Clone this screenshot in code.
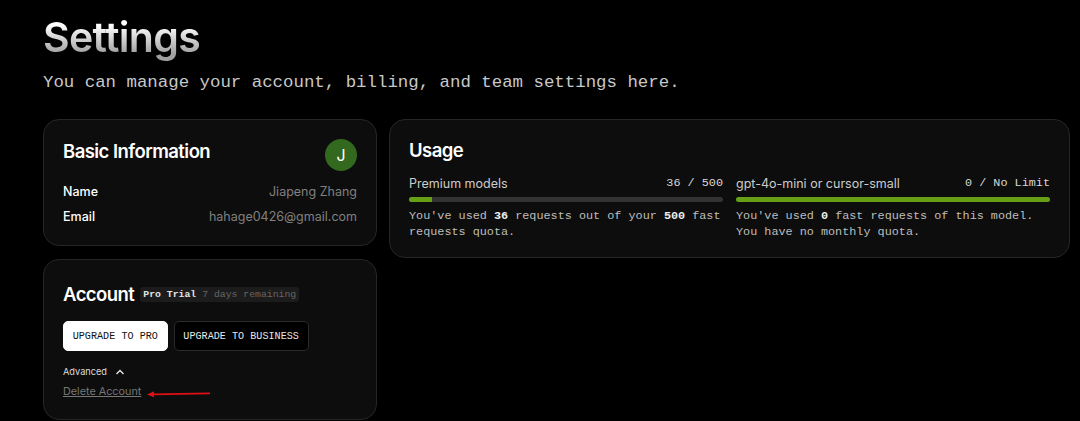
<script lang="ts">
  const usage = [
    { label: 'Premium models', count: '36 / 500', pct: 7.2 },
    { label: 'gpt-4o-mini or cursor-small', count: '0 / No Limit', pct: 100 }
  ];
</script>

<div class="page">
  <h1 class="title">Settings</h1>
  <p class="subtitle">You can manage your account, billing, and team settings here.</p>

  <div class="columns">
    <div class="left">
      <section class="card info">
        <div class="info-head">
          <h2>Basic Information</h2>
          <div class="avatar">J</div>
        </div>
        <div class="row"><span class="key">Name</span><span class="val">Jiapeng Zhang</span></div>
        <div class="row"><span class="key">Email</span><span class="val">hahage0426@gmail.com</span></div>
      </section>

      <section class="card account">
        <div class="account-head">
          <h2>Account</h2>
          <span class="badge"><b>Pro Trial</b> <span>7 days remaining</span></span>
        </div>
        <div class="buttons">
          <button class="btn primary">UPGRADE TO PRO</button>
          <button class="btn">UPGRADE TO BUSINESS</button>
        </div>
        <div class="advanced">
          Advanced
          <svg width="10" height="6" viewBox="0 0 10 6" fill="none">
            <path d="M1.5 5L5 1.5L8.500 5" stroke="#e8e8e8" stroke-width="1.300" />
          </svg>
        </div>
        <a class="delete" href="#delete">Delete Account</a>
        <!-- red annotation arrow from the screenshot -->
        <svg class="arrow" width="64" height="8" viewBox="0 0 64 8">
          <path d="M6 4.300L63 3.300" stroke="#e00f14" stroke-width="1.800" />
          <path d="M0 4.400L7 1.200V7.200Z" fill="#e00f14" />
        </svg>
      </section>
    </div>

    <section class="card usage">
      <h2>Usage</h2>
      <div class="meters">
        <div class="meter">
          <div class="meter-head"><span>{usage[0].label}</span><code>{usage[0].count}</code></div>
          <div class="track"><div class="fill" style="width: {usage[0].pct}%"></div></div>
          <p class="note">You've used <b>36</b> requests out of your <b>500</b> fast<br />requests quota.</p>
        </div>
        <div class="meter">
          <div class="meter-head"><span>{usage[1].label}</span><code>{usage[1].count}</code></div>
          <div class="track"><div class="fill" style="width: {usage[1].pct}%"></div></div>
          <p class="note">You've used <b>0</b> fast requests of this model.<br />You have no monthly quota.</p>
        </div>
      </div>
    </section>
  </div>
</div>

<style>
  :global(body) {
    background: #000;
    overflow: hidden;
  }

  .page {
    height: 421px;
    box-sizing: border-box;
    padding: 13px 10px 0 43px;
    font-family: Inter, 'Liberation Sans', sans-serif;
    color: #fff;
  }

  .title {
    margin: 0;
    font-size: 41px;
    line-height: 48px;
    font-weight: 600;
    letter-spacing: -0.7px;
    background: linear-gradient(180deg, #fff 25%, #a0a0a0 85%);
    -webkit-background-clip: text;
    background-clip: text;
    color: transparent;
    width: fit-content;
  }

  .subtitle {
    margin: 10px 0 0;
    font-family: 'Liberation Mono', monospace;
    font-size: 17.4px;
    line-height: 24px;
    color: #c8c8c8;
  }

  .columns {
    display: flex;
    gap: 12px;
    margin-top: 24px;
    align-items: flex-start;
  }

  .left {
    width: 334px;
    display: flex;
    flex-direction: column;
    gap: 13px;
    flex: none;
  }

  .card {
    box-sizing: border-box;
    background: #0d0d0d;
    border: 1px solid #262626;
    border-radius: 16px;
  }

  h2 {
    margin: 0;
    font-size: 18.5px;
    line-height: 24px;
    font-weight: 600;
    letter-spacing: -0.55px;
  }

  .info {
    height: 127px;
    padding: 19px 19px 0;
  }

  .info-head {
    display: flex;
    justify-content: space-between;
    height: 33px;
    margin-bottom: 6.5px;
  }

  .avatar {
    width: 32px;
    height: 32px;
    border-radius: 50%;
    background: #33691e;
    display: flex;
    align-items: center;
    justify-content: center;
    font-size: 16px;
    font-weight: 400;
    margin-top: -0.5px;
  }

  .row {
    display: flex;
    justify-content: space-between;
    height: 25.5px;
    line-height: 25.5px;
    font-size: 12.5px;
  }

  .key {
    font-weight: 500;
  }

  .val {
    color: #808080;
  }

  .account {
    position: relative;
    height: 161px;
    padding: 22px 19px 0;
  }

  .account-head {
    display: flex;
    align-items: center;
    gap: 6px;
  }

  .badge {
    background: #1c1c1c;
    border-radius: 3px;
    padding: 0 3px;
    font-family: 'Liberation Mono', monospace;
    font-size: 9.8px;
    line-height: 15px;
    color: #666;
  }

  .badge b {
    color: #e4e4e4;
  }

  .buttons {
    display: flex;
    gap: 6px;
    margin-top: 15px;
  }

  .btn {
    height: 30px;
    padding: 0 8.7px;
    border: 1px solid #2a2a2a;
    border-radius: 5px;
    background: #000;
    color: #e8e8e8;
    font-family: 'Liberation Mono', monospace;
    font-size: 10.1px;
    font-weight: 400;
    letter-spacing: 0.03px;
  }

  .btn.primary {
    background: #fff;
    color: #111;
    border-color: #fff;
  }

  .advanced {
    display: flex;
    align-items: center;
    gap: 8px;
    margin-top: 13px;
    font-size: 9.2px;
    line-height: 16px;
    color: #ddd;
  }

  .delete {
    display: block;
    margin-top: 4px;
    width: fit-content;
    font-size: 10.8px;
    line-height: 16px;
    color: #777;
  }

  .arrow {
    position: absolute;
    left: 103px;
    top: 130px;
  }

  .usage {
    flex: 1;
    height: 139px;
    padding: 18px 19px 0;
  }

  .meters {
    display: grid;
    grid-template-columns: 1fr 1fr;
    gap: 13px;
    margin-top: 12px;
  }

  .meter-head {
    display: flex;
    justify-content: space-between;
    align-items: center;
    height: 18px;
    font-size: 12.5px;
    color: #ccc;
  }

  .meter-head code {
    font-family: 'Liberation Mono', monospace;
    font-size: 11.8px;
    color: #d8d8d8;
  }

  .track {
    height: 5px;
    margin-top: 5px;
    border-radius: 3px;
    background: #333;
    overflow: hidden;
  }

  .fill {
    height: 100%;
    background: #67a017;
  }

  .note {
    margin: 6px 0 0;
    font-family: 'Liberation Mono', monospace;
    font-size: 11.8px;
    line-height: 16px;
    color: #bdbdbd;
  }

  .note b {
    color: #eee;
  }
</style>
